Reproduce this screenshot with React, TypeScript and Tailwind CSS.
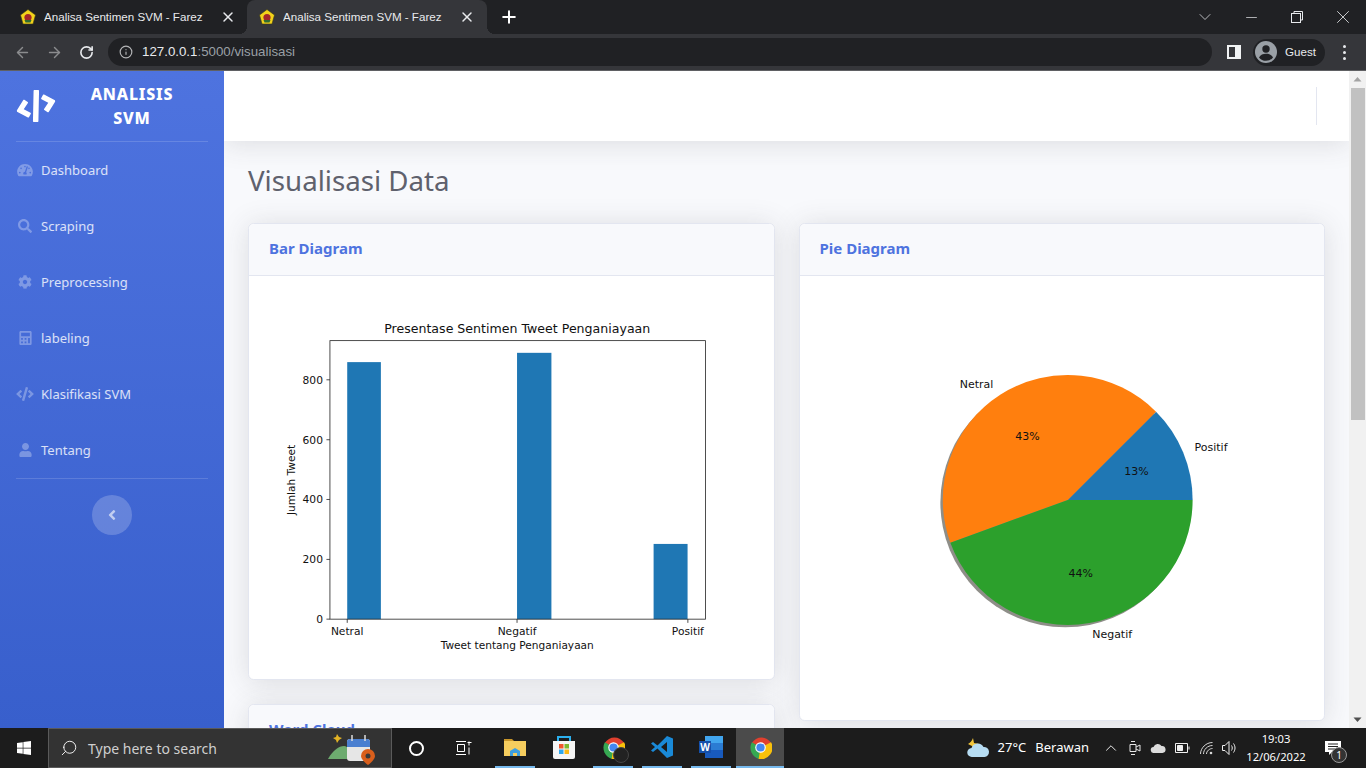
import { ArrowLeft, ArrowRight, ChevronDown, ChevronUp, Info, Minus, Plus, RotateCw, Search, X } from "lucide-react";
import { FaAngleLeft, FaCalculator, FaCode, FaCog, FaSearch, FaTachometerAlt, FaUser, FaWindows } from "react-icons/fa";

const NAV_ITEMS = [
  { label: "Dashboard", icon: FaTachometerAlt, iconClass: "h-[14px] w-[16px]" },
  { label: "Scraping", icon: FaSearch, iconClass: "h-[14px] w-[14px]" },
  { label: "Preprocessing", icon: FaCog, iconClass: "h-[14px] w-[14px]" },
  { label: "labeling", icon: FaCalculator, iconClass: "h-[14px] w-[13px]" },
  { label: "Klasifikasi SVM", icon: FaCode, iconClass: "h-[14px] w-[18px]" },
  { label: "Tentang", icon: FaUser, iconClass: "h-[14px] w-[13px]" },
];

const Y_TICKS = [
  { label: "800", y: 83.7 },
  { label: "600", y: 143.7 },
  { label: "400", y: 203.5 },
  { label: "200", y: 263.5 },
  { label: "0", y: 323.3 },
];

const X_TICKS = [
  { label: "Netral", x: 78.3 },
  { label: "Negatif", x: 248.3 },
  { label: "Positif", x: 419.3 },
];

function Favicon() {
  return (
    <svg width="16" height="16" viewBox="0 0 16 16" className="shrink-0">
      <path d="M8 .5 15.500 6 13 15H3L.5 6Z" fill="#f2d21b" stroke="#3b3a1a" strokeWidth=".6" />
      <circle cx="8" cy="8.500" r="3.600" fill="#a3262a" />
      <path d="M4.500 11h7l-1 2.500h-5Z" fill="#2f6b34" />
    </svg>
  );
}

function Tab({ active }: { active?: boolean }) {
  return (
    <div className={`relative flex h-[34px] w-[240px] items-center gap-2 rounded-t-lg px-3 ${active ? "-ml-px bg-[#35363a]" : ""}`}>
      {active && (
        <>
          <span className="absolute bottom-0 -left-2 h-2 w-2 bg-[radial-gradient(circle_at_0_0,transparent_8px,#35363a_8px)]" />
          <span className="absolute -right-2 bottom-0 h-2 w-2 bg-[radial-gradient(circle_at_100%_0,transparent_8px,#35363a_8px)]" />
        </>
      )}
      <Favicon />
      <span className="flex-1 truncate text-[11.6px] text-[#e8eaed]">Analisa Sentimen SVM - Farez</span>
      <X size={16} strokeWidth={2.2} className="shrink-0 text-[#e8eaed]" />
    </div>
  );
}

function BrowserChrome() {
  return (
    <div className="shrink-0 border-b border-b-[#5f6063] font-['Liberation_Sans',sans-serif]">
      <div className="flex h-[34px] items-center bg-[#202124] pl-2">
        <Tab />
        <Tab active />
        <Plus size={20} strokeWidth={2.4} className="ml-3 text-white" />
        <div className="ml-auto flex items-center text-[#e8eaed]">
          <div className="flex h-7 w-[46px] items-center justify-center">
            <ChevronDown size={20} strokeWidth={0.9} />
          </div>
          <div className="flex h-7 w-[46px] items-center justify-center">
            <Minus size={17} strokeWidth={1} />
          </div>
          <div className="flex h-7 w-[46px] items-center justify-center">
            <svg width="12" height="12" viewBox="0 0 12 12" fill="none" stroke="currentColor">
              <rect x=".5" y="2.500" width="9" height="9" fill="#202124" />
              <path d="M3 2.500V.5h8.500v8.500H9.500" />
            </svg>
          </div>
          <div className="flex h-7 w-[46px] items-center justify-center">
            <X size={22} strokeWidth={0.9} />
          </div>
        </div>
      </div>
      <div className="flex h-[36px] items-center bg-[#35363a] pl-[14px] pr-5">
        <ArrowLeft size={17} className="text-[#8b8c8e]" />
        <ArrowRight size={17} className="ml-[15px] text-[#8b8c8e]" />
        <RotateCw size={15} strokeWidth={2.6} className="ml-[16px] text-[#e8eaed]" />
        <div className="ml-[14px] flex h-[28px] flex-1 items-center rounded-full bg-[#202124] pl-[11px]">
          <Info size={14} className="text-[#b4b5b7]" />
          <span className="ml-[9px] text-[13.3px] text-[#e8eaed]">
            127.0.0.1<span className="text-[#9aa0a6]">:5000/visualisasi</span>
          </span>
        </div>
        <svg width="14" height="14" viewBox="0 0 14 14" className="ml-[15px] shrink-0">
          <path d="M0 0h14v14H0Z" fill="#f1f3f4" />
          <path d="M2 2h6v10H2Z" fill="#35363a" />
        </svg>
        <div className="ml-[12px] flex h-[27px] w-[72px] items-center gap-[8px] rounded-full bg-[#202124] pl-[2px]">
          <svg width="22" height="22" viewBox="0 0 22 22" className="shrink-0">
            <circle cx="11" cy="11" r="11" fill="#9aa0a6" />
            <circle cx="11" cy="8" r="3.700" fill="#202124" />
            <path d="M4 16.500c1.500-3 4-3.800 7-3.800s5.500.8 7 3.800a9 9 0 0 1-14 0Z" fill="#202124" />
          </svg>
          <span className="text-[11.6px] text-[#e8eaed]">Guest</span>
        </div>
        <div className="ml-[18px] flex flex-col gap-[3px]">
          <span className="h-[3px] w-[3px] rounded-full bg-[#e8eaed]" />
          <span className="h-[3px] w-[3px] rounded-full bg-[#e8eaed]" />
          <span className="h-[3px] w-[3px] rounded-full bg-[#e8eaed]" />
        </div>
      </div>
    </div>
  );
}

function Sidebar() {
  return (
    <aside className="flex w-[224px] shrink-0 flex-col bg-[linear-gradient(180deg,#4e73df_0%,#385fcc_100%)] font-['Noto_Sans',sans-serif]">
      <div className="mx-4 flex h-[71px] shrink-0 items-center border-b border-b-white/15">
        <FaCode size={40} className="shrink-0 -rotate-15 text-white" />
        <div className="flex-1 text-center text-[16px] leading-[24px] font-extrabold tracking-[.05em] text-white">
          ANALISIS
          <br />
          SVM
        </div>
      </div>
      <nav className="flex flex-col">
        {NAV_ITEMS.map(({ label, icon: Icon, iconClass }) => (
          <a key={label} className="flex h-14 items-center px-4 text-[13px] text-white/80">
            <span className="flex w-[18px] justify-center">
              <Icon className={`${iconClass} text-white/30`} />
            </span>
            <span className="ml-[7px] pt-[2px]">{label}</span>
          </a>
        ))}
      </nav>
      <div className="mx-4 border-t border-t-white/15" />
      <button className="mx-auto mt-4 flex h-10 w-10 items-center justify-center rounded-full bg-white/20">
        <FaAngleLeft className="h-4 w-4 text-white/60" />
      </button>
    </aside>
  );
}

function Card({ title, children }: { title: string; children?: React.ReactNode }) {
  return (
    <section className="rounded-[5.6px] border border-[#e3e6f0] bg-white shadow-[0_2.4px_28px_0_rgba(58,59,69,.15)]">
      <header className="flex h-[52px] items-center rounded-t-[5.6px] border-b border-b-[#e3e6f0] bg-[#f8f9fc] px-5 pb-[2px]">
        <h6 className="text-[15px] font-bold text-[#4e73df]">{title}</h6>
      </header>
      <div className="p-5">{children}</div>
    </section>
  );
}

function BarChart() {
  return (
    <svg viewBox="0 0 485 363" className="block h-[363px] w-full font-['DejaVu_Sans',sans-serif]" fill="#111">
      <rect x="78.3" y="66" width="33.700" height="257.300" fill="#1f77b4" />
      <rect x="248.3" y="56.700" width="34.400" height="266.600" fill="#1f77b4" />
      <rect x="385" y="248" width="34" height="75.300" fill="#1f77b4" />
      <rect x="61" y="44.500" width="376" height="278.800" fill="none" stroke="#222" strokeWidth=".8" />
      {Y_TICKS.map((t) => (
        <g key={t.label}>
          <path d={`M57.500 ${t.y}H61`} stroke="#222" strokeWidth=".8" />
          <text x="54" y={t.y + 4} textAnchor="end" fontSize="10.700">{t.label}</text>
        </g>
      ))}
      {X_TICKS.map((t) => (
        <g key={t.label}>
          <path d={`M${t.x} 323.300V327`} stroke="#222" strokeWidth=".8" />
          <text x={t.x} y="339" textAnchor="middle" fontSize="10.700">{t.label}</text>
        </g>
      ))}
      <text x="248.500" y="37" textAnchor="middle" fontSize="12.600">Presentase Sentimen Tweet Penganiayaan</text>
      <text x="248.500" y="353" textAnchor="middle" fontSize="10.600">Tweet tentang Penganiayaan</text>
      <text transform="translate(26.500 184) rotate(-90)" textAnchor="middle" fontSize="10.600">Jumlah Tweet</text>
    </svg>
  );
}

function PieChart() {
  return (
    <svg viewBox="0 0 485 404" className="block h-[404px] w-full font-['DejaVu_Sans',sans-serif]" fill="#111">
      <circle cx="245.500" cy="206.500" r="125" fill="#8e8e88" />
      <path d="M248 204H373A125 125 0 0 0 336.400 115.600Z" fill="#1f77b4" />
      <path d="M248 204 336.400 115.600A125 125 0 0 0 130.500 246.750Z" fill="#ff7f0e" />
      <path d="M248 204 130.500 246.750A125 125 0 0 0 373 204Z" fill="#2ca02c" />
      <text x="140" y="92" fontSize="11">Netral</text>
      <text x="375" y="155" fontSize="11">Positif</text>
      <text x="272.500" y="342" fontSize="11">Negatif</text>
      <text x="207.700" y="144" textAnchor="middle" fontSize="11">43%</text>
      <text x="316.700" y="178.700" textAnchor="middle" fontSize="11">13%</text>
      <text x="261" y="280.700" textAnchor="middle" fontSize="11">44%</text>
    </svg>
  );
}

function Scrollbar() {
  return (
    <div className="flex w-[17px] shrink-0 flex-col items-center justify-between bg-[#f1f1f1]">
      <div className="flex w-full flex-col items-center">
        <svg width="9" height="17" viewBox="0 0 9 17"><path d="M.5 10.500 4.500 6l4 4.500Z" fill="#a3a3a3" /></svg>
        <div className="h-[332px] w-[14px] bg-[#c1c1c1]" />
      </div>
      <svg width="9" height="17" viewBox="0 0 9 17"><path d="M.5 6.500 4.500 11l4-4.500Z" fill="#505050" /></svg>
    </div>
  );
}

function ChromeIcon() {
  return (
    <svg width="23" height="23" viewBox="0 0 24 24">
      <path d="M12 12 3 7A12 12 0 0 1 23 7Z" fill="#e0402f" />
      <path d="M12 12 3 6.500A12 12 0 0 0 11 24Z" fill="#36a852" />
      <path d="M12 12 10 24A12 12 0 0 0 23 6.500Z" fill="#f9c10b" />
      <circle cx="12" cy="12" r="5.500" fill="#fff" />
      <circle cx="12" cy="12" r="4.300" fill="#4487f0" />
    </svg>
  );
}

function TaskbarApp({ children, active, running = true }: { children: React.ReactNode; active?: boolean; running?: boolean }) {
  return (
    <div className={`flex h-10 w-[48px] flex-col items-center justify-end ${active ? "bg-[#4b4b4b]" : ""}`}>
      <div className="flex flex-1 items-center justify-center">{children}</div>
      <div className={`h-[2px] ${active ? "w-full" : "w-[40px]"} ${running ? "bg-[#76b9ed]" : ""}`} />
    </div>
  );
}

function Taskbar() {
  return (
    <footer className="flex h-10 shrink-0 items-center bg-[#1c1c1c] font-['Noto_Sans',sans-serif] text-white">
      <div className="flex w-[48px] justify-center">
        <FaWindows size={16} className="text-white" />
      </div>
      <div className="flex h-10 w-[344px] items-center border border-[#5a5a5a] bg-[#333333] pl-[11px]">
        <Search size={18} strokeWidth={1.2} className="-scale-x-100 text-white" />
        <span className="ml-[10px] text-[14px] text-[#cfcfcf]">Type here to search</span>
        <svg width="50" height="34" viewBox="0 0 50 34" className="ml-auto mr-[15px]">
          <path d="m7 7 3-1 1-3 2 3 3 1-3 2-2 3-1-3Z" fill="#e3b324" />
          <path d="M2 28c5-9 11-13 16-13 4 0 7 5 9 13Z" fill="#6dab6f" />
          <rect x="21" y="8" width="23" height="22" rx="3" fill="#e6e6e6" />
          <path d="M21 16v-5a3 3 0 0 1 3-3h17a3 3 0 0 1 3 3v5Z" fill="#4a7fd0" />
          <path d="M26 4v6M39 4v6" stroke="#ddd" strokeWidth="1.500" />
          <path d="M42 18a7 7 0 0 1 7 7c0 4-7 9-7 9s-7-5-7-9a7 7 0 0 1 7-7Z" fill="#d95f1c" />
          <circle cx="42" cy="25" r="2.500" fill="#3a3a3a" />
        </svg>
      </div>
      <div className="flex w-[48px] justify-center">
        <span className="h-[15px] w-[15px] rounded-full border-2 border-white" />
      </div>
      <div className="flex w-[48px] justify-center">
        <svg width="16" height="14" viewBox="0 0 16 14" fill="none" stroke="#fff">
          <path d="M0 .5h10M0 13.500h10M1.500 3.500h7v7h-7ZM13 .5v4M13 6.500v7" />
          <path d="M11.500 1.500h4" />
        </svg>
      </div>
      <div className="ml-[3px] flex items-center gap-px">
        <TaskbarApp>
          <svg width="22" height="20" viewBox="0 0 22 20">
            <path d="M0 2h8l2 2h-10Z" fill="#c8962a" />
            <path d="M0 4h22v15H0Z" fill="#f5cd5e" />
            <path d="M6 19v-5l5-3 5 3v5h-3v-3H9v3Z" fill="#3e9fe0" />
          </svg>
        </TaskbarApp>
        <TaskbarApp running={false}>
          <svg width="24" height="25" viewBox="0 0 24 25">
            <path d="M6 6V2h12v4" fill="none" stroke="#2bb0ee" strokeWidth="2" />
            <path d="M1 6h22v16a2 2 0 0 1-2 2H3a2 2 0 0 1-2-2Z" fill="#f5f5f5" />
            <path d="M7 9h4.500v4.500H7Z" fill="#f0562c" />
            <path d="M12.500 9H17v4.500h-4.500Z" fill="#7eb92f" />
            <path d="M7 14.500h4.500V19H7Z" fill="#2da7ee" />
            <path d="M12.500 14.500H17V19h-4.500Z" fill="#fcb813" />
          </svg>
        </TaskbarApp>
        <div className="relative">
          <TaskbarApp>
            <ChromeIcon />
          </TaskbarApp>
          <span className="absolute top-[19px] left-[24px] h-4 w-4 rounded-full border border-[#444] bg-[#222]" />
        </div>
        <TaskbarApp>
          <svg width="24" height="24" viewBox="0 0 24 24">
            <path d="M17 1 7.500 10.500 3 7 1 8.500 5 12l-4 3.500L3 17l4.500-3.500L17 23l6-2.500v-17Zm0 6v10l-6-5Z" fill="#1a8ad8" />
          </svg>
        </TaskbarApp>
        <TaskbarApp>
          <svg width="24" height="22" viewBox="0 0 24 22">
            <path d="M6 0h18v7H6Z" fill="#41a5ee" />
            <path d="M6 7h18v7H6Z" fill="#2b7cd3" />
            <path d="M6 14h18v8H6Z" fill="#185abd" />
            <path d="M0 5h12v12H0Z" fill="#1550aa" />
            <text x="6" y="15" textAnchor="middle" fontSize="10" fontWeight="700" fill="#fff">W</text>
          </svg>
        </TaskbarApp>
        <TaskbarApp active>
          <ChromeIcon />
        </TaskbarApp>
      </div>
      <div className="ml-auto flex items-center">
        <svg width="24" height="22" viewBox="0 0 24 22" className="mr-[8px]">
          <path d="M7 1c-1 3-3 5-5 6l4 2 3 3 3-2 1-3-5-1Z" fill="#f3c63b" />
          <path d="M6 20a4.500 4.500 0 0 1-.5-9 6.500 6.500 0 0 1 12-1 5 5 0 0 1 1 10Z" fill="#b6dcf2" />
        </svg>
        <span className="text-[13px]">27°C</span>
        <span className="ml-[9px] text-[13px]">Berawan</span>
        <ChevronUp size={18} strokeWidth={1.2} className="ml-[13px]" />
        <svg width="12" height="16" viewBox="0 0 12 16" fill="none" stroke="#e6e6e6" className="ml-[9px]">
          <path d="M1 4.500h6v7H1ZM7 7l4-2v6L7 9M2 1.500h4M2 14.500h4" />
        </svg>
        <svg width="16" height="10" viewBox="0 0 16 10" className="ml-[9px]">
          <path d="M4 10a3 3 0 0 1-.5-6 4.500 4.500 0 0 1 8-1 3.500 3.500 0 0 1 1 7Z" fill="#dcdcdc" />
        </svg>
        <svg width="15" height="10" viewBox="0 0 15 10" fill="none" stroke="#f0f0f0" className="ml-[9px]">
          <path d="M.5.5h12v9H.5Z" />
          <path d="M2.500 2.500h5v5h-5Z" fill="#f0f0f0" />
          <path d="M14 3.500v3" />
        </svg>
        <svg width="13" height="13" viewBox="0 0 13 13" fill="none" stroke="#d8d8d8" className="ml-[10px]">
          <path d="M.5 12C.5 6 6 .5 12.500.5M3.500 12c0-4.500 4-8.500 9-8.500M6.500 12c0-3 3-5.500 6-5.500" />
          <circle cx="11" cy="11" r="1.300" fill="#d8d8d8" stroke="none" />
        </svg>
        <svg width="16" height="14" viewBox="0 0 16 14" fill="none" stroke="#eee" className="ml-[9px]">
          <path d="M.5 4.500h2.500l4-4v13l-4-4H.5ZM9.500 4.500c1 1.500 1 3.500 0 5M11.500 2.500c2 3 2 6 0 9" />
        </svg>
        <div className="ml-[7px] flex w-[62px] flex-col items-center text-[11.2px] leading-[18px]">
          <span>19:03</span>
          <span>12/06/2022</span>
        </div>
        <div className="relative ml-4 mr-[23px] flex h-10 w-[20px] items-center justify-center">
          <svg width="16" height="15" viewBox="0 0 16 15">
            <path d="M0 0h16v11H7l-3 3v-3H0Z" fill="#fff" />
            <path d="M3 3h10M3 5.500h10M3 8h7" stroke="#222" />
          </svg>
          <span className="absolute top-[19px] left-[8px] flex h-4 w-4 items-center justify-center rounded-full border border-[#999] bg-[#333] text-[10px] leading-none">1</span>
        </div>
      </div>
    </footer>
  );
}

export default function App() {
  return (
    <div className="flex h-screen flex-col overflow-hidden">
      <BrowserChrome />
      <div className="flex min-h-0 flex-1">
        <Sidebar />
        <main className="flex min-w-0 flex-1 flex-col overflow-hidden bg-[#f8f9fc] font-['Noto_Sans',sans-serif]">
          <div className="z-10 flex h-[70px] shrink-0 items-center justify-end bg-white pr-8 shadow-[0_2.4px_28px_0_rgba(58,59,69,.15)]">
            <div className="h-[38px] w-px bg-[#e3e6f0]" />
          </div>
          <div className="px-6 pt-[23px]">
            <h1 className="mb-[26px] text-[27.700px] leading-[33px] font-normal text-[#5f616d]">Visualisasi Data</h1>
            <div className="grid grid-cols-2 items-start gap-6">
              <div className="flex flex-col gap-6">
                <Card title="Bar Diagram">
                  <BarChart />
                </Card>
                <Card title="Word Cloud">
                  <div className="h-[300px]" />
                </Card>
              </div>
              <Card title="Pie Diagram">
                <PieChart />
              </Card>
            </div>
          </div>
        </main>
        <Scrollbar />
      </div>
      <Taskbar />
    </div>
  );
}
